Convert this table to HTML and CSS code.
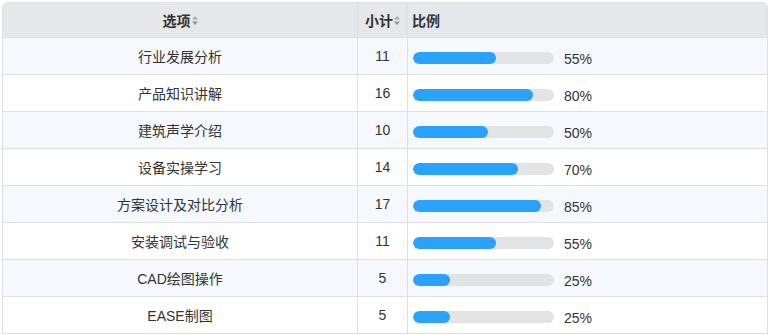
FILE: index.html
```html
<!DOCTYPE html>
<html lang="zh">
<head>
<meta charset="utf-8">
<link rel="stylesheet" href="styles.css">
</head>
<body>
<div class="wrap">
<table class="tbl">
  <thead>
    <tr>
      <th class="c1"><span class="hd">选项<svg class="sort" width="6" height="9" viewBox="0 0 6 9"><path d="M3 0L6 3.5H0Z" fill="#a8abb0"/><path d="M3 9L6 5.5H0Z" fill="#8f9297"/></svg></span></th>
      <th class="c2"><span class="hd">小计<svg class="sort" width="6" height="9" viewBox="0 0 6 9"><path d="M3 0L6 3.5H0Z" fill="#a8abb0"/><path d="M3 9L6 5.5H0Z" fill="#8f9297"/></svg></span></th>
      <th class="c3">比例</th>
    </tr>
  </thead>
  <tbody>
    <tr class="odd"><td class="c1">行业发展分析</td><td class="c2">11</td><td class="c3"><div class="pct"><div class="track"><div class="fill" style="width:83px"></div></div><span class="val">55%</span></div></td></tr>
    <tr><td class="c1">产品知识讲解</td><td class="c2">16</td><td class="c3"><div class="pct"><div class="track"><div class="fill" style="width:120px"></div></div><span class="val">80%</span></div></td></tr>
    <tr class="odd"><td class="c1">建筑声学介绍</td><td class="c2">10</td><td class="c3"><div class="pct"><div class="track"><div class="fill" style="width:75px"></div></div><span class="val">50%</span></div></td></tr>
    <tr><td class="c1">设备实操学习</td><td class="c2">14</td><td class="c3"><div class="pct"><div class="track"><div class="fill" style="width:105px"></div></div><span class="val">70%</span></div></td></tr>
    <tr class="odd"><td class="c1">方案设计及对比分析</td><td class="c2">17</td><td class="c3"><div class="pct"><div class="track"><div class="fill" style="width:128px"></div></div><span class="val">85%</span></div></td></tr>
    <tr><td class="c1">安装调试与验收</td><td class="c2">11</td><td class="c3"><div class="pct"><div class="track"><div class="fill" style="width:83px"></div></div><span class="val">55%</span></div></td></tr>
    <tr class="odd"><td class="c1">CAD绘图操作</td><td class="c2">5</td><td class="c3"><div class="pct"><div class="track"><div class="fill" style="width:37px"></div></div><span class="val">25%</span></div></td></tr>
    <tr><td class="c1">EASE制图</td><td class="c2">5</td><td class="c3"><div class="pct"><div class="track"><div class="fill" style="width:37px"></div></div><span class="val">25%</span></div></td></tr>
  </tbody>
</table>
</div>
</body>
</html>
```
FILE: styles.css
```css
html, body {
  margin: 0;
  padding: 0;
  background: #ffffff;
}
body {
  font-family: "Liberation Sans", Arial, "Noto Sans CJK SC", sans-serif;
  font-size: 14px;
  color: #333333;
}
.wrap {
  margin: 2px 0 0 2px;
  width: 764px;
  border: 1px solid #dcdfe4;
  border-bottom: none;
  border-radius: 6px 6px 0 0;
  overflow: hidden;
}
.tbl {
  width: 764px;
  border-collapse: separate;
  border-spacing: 0;
  table-layout: fixed;
}
.tbl th, .tbl td {
  padding: 0;
  border-bottom: 1px solid #dcdfe4;
  vertical-align: middle;
}
.tbl th {
  height: 34px;
  background: #e5e7eb;
  font-weight: bold;
  color: #333333;
}
.tbl td {
  height: 36px;
}
.tbl tr.odd td {
  background: #f5f8fc;
}
.c1 {
  width: 354px;
  text-align: center;
  border-right: 1px solid #dcdfe4;
}
.c2 {
  width: 49px;
  text-align: center;
  border-right: 1px solid #dcdfe4;
}
th.c3 {
  text-align: left;
  padding-left: 4px;
}
td.c3 {
  padding-left: 5px;
}
.hd {
  display: inline-flex;
  align-items: center;
  gap: 1px;
}
.sort {
  display: block;
  margin-top: 1px;
}
.pct {
  display: flex;
  align-items: center;
  gap: 10px;
  padding-top: 3px;
}
.val {
  margin-top: 3px;
}
.track {
  width: 141px;
  height: 12px;
  border-radius: 6px;
  background: #e2e3e5;
  overflow: hidden;
}
.fill {
  height: 12px;
  border-radius: 6px;
  background: #2aa2f9;
}
```
